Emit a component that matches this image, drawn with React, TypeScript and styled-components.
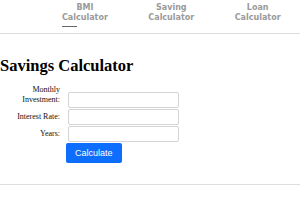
import * as React from 'react';
import styled, { createGlobalStyle } from 'styled-components';

const GlobalStyle = createGlobalStyle`
  html, body {
    margin: 0;
    padding: 0;
    background: #fff;
  }
  body {
    font-family: "Liberation Serif", "Times New Roman", serif;
    overflow: hidden;
  }
`;

const Header = styled.header`
  padding: 3px 0 6px 52px;
  border-bottom: 1px solid #dddddd;
`;

const Nav = styled.nav`
  display: flex;
  gap: 20.5px;
`;

const NavLink = styled.a<{ $active?: boolean }>`
  display: flex;
  flex-direction: column;
  align-items: center;
  padding: 0 10px;
  font-family: "DejaVu Sans", Verdana, sans-serif;
  font-weight: 700;
  font-size: 8px;
  line-height: 10px;
  color: #9a9a9a;
  text-decoration: none;
  cursor: pointer;

  &::after {
    content: '';
    align-self: flex-start;
    width: 15px;
    height: 1.5px;
    margin-top: 2.5px;
    background: ${p => (p.$active ? '#666' : 'transparent')};
  }
`;

const Main = styled.main`
  padding: 0 0 21px 0;
  border-bottom: 1px solid #dddddd;
`;

const Title = styled.h1`
  margin: 22px 0 10px 0;
  font-family: "Liberation Serif", "Times New Roman", serif;
  font-size: 16.5px;
  font-weight: 700;
  line-height: 19px;
  color: #000;
`;

const Form = styled.form`
  display: flex;
  flex-direction: column;
  gap: 1px;
`;

const Row = styled.div`
  display: flex;
  align-items: flex-end;
  gap: 8px;
`;

const Label = styled.label`
  width: 60px;
  padding-bottom: 3px;
  text-align: right;
  font-size: 8px;
  line-height: 10px;
  color: #111;
`;

const Input = styled.input`
  box-sizing: border-box;
  width: 111px;
  height: 16px;
  margin: 0;
  padding: 1px 3px;
  border: 1px solid #d4d4d4;
  border-radius: 2px;
  font-size: 8px;
  outline: none;
`;

const Button = styled.button`
  align-self: flex-start;
  margin: 0 0 0 66px;
  height: 20px;
  padding: 0 9px;
  border: none;
  border-radius: 2px;
  background: #0d6efd;
  color: #fff;
  font-family: "Liberation Sans", Arial, sans-serif;
  font-size: 9px;
  cursor: pointer;
`;

export default function App() {
  const [amount, setAmount] = React.useState('');
  const [rate, setRate] = React.useState('');
  const [years, setYears] = React.useState('');

  return (
    <>
      <GlobalStyle />
      <Header>
        <Nav>
          <NavLink $active>
            <span>BMI</span>
            <span>Calculator</span>
          </NavLink>
          <NavLink>
            <span>Saving</span>
            <span>Calculator</span>
          </NavLink>
          <NavLink>
            <span>Loan</span>
            <span>Calculator</span>
          </NavLink>
        </Nav>
      </Header>
      <Main>
        <Title>Savings Calculator</Title>
        <Form onSubmit={e => e.preventDefault()}>
          <Row>
            <Label htmlFor="amount">Monthly Investment:</Label>
            <Input id="amount" type="number" value={amount} onChange={e => setAmount(e.target.value)} />
          </Row>
          <Row>
            <Label htmlFor="rate">Interest Rate:</Label>
            <Input id="rate" type="number" value={rate} onChange={e => setRate(e.target.value)} />
          </Row>
          <Row>
            <Label htmlFor="years">Years:</Label>
            <Input id="years" type="number" value={years} onChange={e => setYears(e.target.value)} />
          </Row>
          <Button type="submit">Calculate</Button>
        </Form>
      </Main>
    </>
  );
}
